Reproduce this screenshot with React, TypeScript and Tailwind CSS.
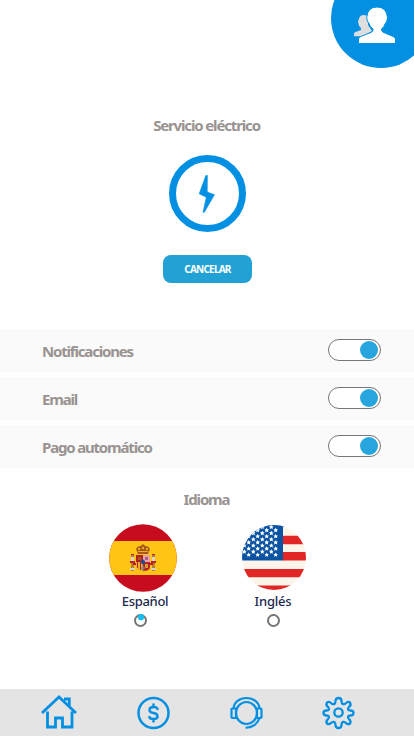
const stars: [number, number][] = [];
for (let r = 0; r < 10; r++) {
  for (let c = 0; c < 4; c++) {
    stars.push([(r % 2 ? 6.7 : 2.3) + c * 9, 2 + r * 3.08]);
  }
}

const star = "M0-2.3L.8-.8L2.3-.8L1.200 .4L1.500 2.100L0 1.300L-1.500 2.100L-1.200 .4L-2.300-.8L-.8-.8Z";

function Heading({ children }: { children: string }) {
  return <h2 className="whitespace-nowrap pr-px text-center text-[15px] font-bold leading-5 tracking-[-1.150px] text-[#999391]">{children}</h2>;
}

function SettingRow({ label }: { label: string }) {
  return (
    <div className="flex h-[43px] items-center justify-between bg-[#fafafa] pl-[42px] pr-[33px]">
      <span className="mt-px whitespace-nowrap text-[15px] font-bold leading-5 tracking-[-1.180px] text-[#999391]">{label}</span>
      <span className="mb-px flex h-[22px] w-[53px] items-center justify-end rounded-full border border-[#777] bg-white pr-[2px]">
        <span className="size-[18px] rounded-full bg-[#26a5df]" />
      </span>
    </div>
  );
}

function SpainFlag() {
  return (
    <svg width="68" height="68" viewBox="0 0 68 68">
      <defs>
        <clipPath id="es"><circle cx="34" cy="34" r="33.8" /></clipPath>
      </defs>
      <g clipPath="url(#es)">
        <path fill="#c60c1e" d="M0 0h68v68H0z" />
        <path fill="#ffc414" d="M0 17h68v34H0z" />
      </g>
      <path fill="#b9822a" d="M22 31h3v16h-3zM43 31h3v16h-3z" />
      <path fill="#d8d2c8" d="M22 33h3v4h-3zM43 33h3v4h-3zM21 44h5v2h-5zM42 44h5v2h-5z" />
      <path fill="#c01d28" d="M21 37h5v2h-5zM24 39h3v2h-3zM42 37h5v2h-5zM41 39h3v2h-3zM22 30h3v1h-3zM43 30h3v1h-3z" />
      <path fill="#a9581c" d="M29 30l-2-5 2-2.500 3-.5 1-1.500h2l1 1.500 3 .5 2 2.500-2 5z" />
      <path fill="#efae20" d="M29 24h2v2h-2zM33 23h2v2h-2zM37 24h2v2h-2zM29 27h10v1H29z" />
      <path fill="#b31e26" d="M27 31h7v7h-7z" />
      <path fill="#e9a2a7" d="M34 31h7v7h-7z" />
      <path fill="#e8b129" d="M27 38h7v9q-7 0-7-4z" />
      <path fill="#b8202d" d="M34 38h7v5q0 4-7 4zM28 38h1v6h-1zM31 38h1v8h-1z" />
      <path fill="#a65a1b" d="M29 33h3v3h-3z" />
      <path fill="#b05c8e" d="M36 33h3v3h-3z" />
      <path fill="#d99c25" d="M36 40h3v4h-3z" />
      <ellipse cx="34" cy="38" rx="2" ry="2.500" fill="#234d91" />
      <path fill="#8d7c75" d="M32 44l2-2 2 2-2 3z" />
    </svg>
  );
}

function UsaFlag() {
  return (
    <svg width="64" height="65" viewBox="0 0 64 65">
      <defs>
        <clipPath id="us"><ellipse cx="32" cy="32.500" rx="32" ry="32.500" /></clipPath>
      </defs>
      <g clipPath="url(#us)">
        <path fill="#fff4ea" d="M0 0h64v65H0z" />
        <path fill="#e02725" d="M40 10.700h24v8.600H40zM40 27h24v8.500H40zM0 44h64v8.300H0zM0 60.500h64V65H0z" />
        <path fill="#0b53a3" d="M0 0h41v34q0 1.500-1.500 1.500H0zM40 0h6v2H40z" />
        {stars.map(([x, y], i) => <path key={i} d={star} fill="#fff" transform={`translate(${x} ${y})`} />)}
      </g>
    </svg>
  );
}

function Radio({ checked }: { checked?: boolean }) {
  return (
    <svg width="13" height="13" viewBox="0 0 13 13">
      <circle cx="6.500" cy="6.500" r="5.500" fill="#fff" stroke="#757575" strokeWidth="2" />
      {checked && <circle cx="7" cy="3.200" r="3.100" fill="#16bdf2" />}
    </svg>
  );
}

export default function App() {
  return (
    <main className="flex h-[736px] w-[414px] flex-col overflow-hidden bg-white font-['Noto_Sans','Open_Sans',sans-serif]">
      <header className="h-[68px] shrink-0 overflow-hidden pl-[331px]">
        <div className="-mt-8 flex size-[100px] items-start rounded-full bg-[#0490e2] pl-[22px] pt-[39px]">
          <svg width="43" height="38" viewBox="0 0 43 38">
            <path fill="#dedede" d="M1 29.300V26.300Q1.500 25 4 24.500L8 23V21Q5.500 19 5.300 16Q4.500 14 6 12Q6.500 8 11 8Q14.500 8 15 11V18L19 24L10 29.300Z" />
            <path fill="#fff" stroke="#0490e2" strokeWidth="1" d="M5.500 36.500V32Q5.500 30.200 8 29.400L18.500 25.200Q20.500 24 20 22Q17 20 16 16.500Q13.800 14.500 13.700 10.500Q14.500 0 24 0Q33.500 0 34.500 10.500Q34.500 14.500 32 17Q31 20 28.600 22Q28 24 30 25.200L40 29.400Q42.500 30.500 42.500 32V36.500Z" />
          </svg>
        </div>
      </header>
      <section className="flex h-[261px] shrink-0 flex-col items-center pt-[47px]">
        <Heading>Servicio eléctrico</Heading>
        <div className="mt-[20px] flex size-[77px] items-center justify-center rounded-full border-[7px] border-[#0490e2]">
          <svg width="18" height="40" viewBox="0 0 18 40">
            <path fill="#0490e2" stroke="#0490e2" strokeWidth=".6" d="M7.800 1.500L1.200 19.800L8.300 23.300L5 38.300H6.300L16.500 20.700L9.200 18L9.400 1.500Z" />
          </svg>
        </div>
        <button className="mt-[23px] h-[28px] w-[89px] rounded-lg bg-[#22a2d4] pl-px pt-px text-[10px] font-bold tracking-[-0.780px] text-white">CANCELAR</button>
      </section>
      <section className="flex shrink-0 flex-col gap-[5px]">
        <SettingRow label="Notificaciones" />
        <SettingRow label="Email" />
        <SettingRow label="Pago automático" />
      </section>
      <section className="flex grow flex-col pt-[21px]">
        <Heading>Idioma</Heading>
        <div className="mt-[15px] flex pl-[100px]">
          <div className="flex w-[90px] flex-col items-center">
            <div className="h-[68px] pr-[5px]"><SpainFlag /></div>
            <span className="h-[22px] whitespace-nowrap text-[13px] font-medium leading-[19px] tracking-[-0.300px] text-[#20294f]">Español</span>
            <div className="pr-[9px]"><Radio checked /></div>
          </div>
          <div className="ml-[38px] flex w-[90px] flex-col items-center">
            <div className="h-[68px] pl-[2px] pt-px"><UsaFlag /></div>
            <span className="h-[22px] whitespace-nowrap text-[13px] font-medium leading-[19px] tracking-[-0.200px] text-[#20294f]">Inglés</span>
            <Radio />
          </div>
        </div>
      </section>
      <nav className="flex h-[47px] shrink-0 items-center bg-[#e4e4e4] pl-[41px] text-[#0490e2]">
        <svg width="36" height="36" viewBox="0 0 36 36" fill="none" stroke="currentColor" strokeWidth="2.800">
          <path d="M1 18L18 2L35 18M23 4H28.300V11M6.500 16.500V32H14.500V23H21.500V32H31V16.500" />
        </svg>
        <svg className="ml-[60px]" width="33" height="34" viewBox="0 0 33 34" fill="none" stroke="currentColor" strokeWidth="2.500" strokeLinecap="round">
          <circle cx="16.500" cy="17" r="15" />
          <path d="M20.500 13Q20 11 16.500 11Q12.500 11 12.500 14Q12.500 16.500 16.500 17Q20.500 17.500 20.500 20.500Q20.500 23 16.500 23Q12.500 23 12.500 21M16.500 8.500V11M16.500 23V25.500" />
        </svg>
        <svg className="ml-[60px]" width="33" height="34" viewBox="0 0 33 34" fill="none" stroke="currentColor" strokeWidth="2.200">
          <ellipse cx="16.500" cy="17" rx="10.500" ry="11" />
          <path d="M3.500 12.500C4 6 9.500 2 16.500 2S29 6 29.500 12.500M15.500 31.500C23 32 28 27 29.500 22M6 12.500H2.500Q1.500 12.500 1.500 13.500V21Q1.500 22 2.500 22H6ZM27 12.500H30.500Q31.500 12.500 31.500 13.500V21Q31.500 22 30.500 22H27Z" />
        </svg>
        <svg className="ml-[59px]" width="33" height="34" viewBox="0 0 33 34" fill="none" stroke="currentColor" strokeWidth="2.300" strokeLinejoin="round">
          <circle cx="16.500" cy="16.500" r="4.200" />
          <path d="M13.500 5Q13.500 2 16.500 2T19.500 5C19.500 8.500 22 9 24 7Q26 5 28 6.500Q29.500 9 27 11C25 13 26 14.500 28.500 14.500Q31.500 14.500 31.500 17T28.500 19.500C26 19.500 25 21 27 23Q29.500 25.500 28 27.500Q26 29 24 27C22 25 19.500 25.500 19.500 29Q19.500 32 16.500 32T13.500 29C13.500 25.500 11 25 9 27Q7 29 5 27.500Q3.500 25.500 6 23C8 21 7 19.500 4.500 19.500Q1.500 19.500 1.500 17T4.500 14.500C7 14.500 8 13 6 11Q3.500 9 5 6.500Q7 5 9 7C11 9 13.500 8.500 13.500 5Z" />
        </svg>
      </nav>
    </main>
  );
}
